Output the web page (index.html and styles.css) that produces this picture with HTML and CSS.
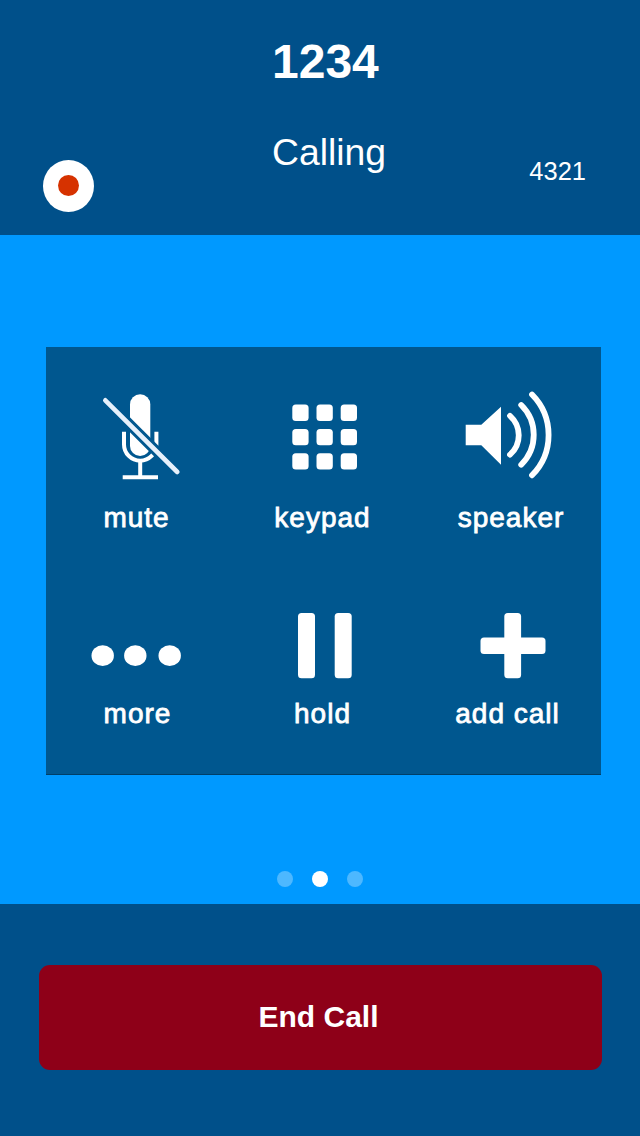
FILE: index.html
```html
<!DOCTYPE html>
<html lang="en">
<head>
  <meta charset="UTF-8">
  <meta name="viewport" content="width=device-width, initial-scale=1.0">
  <title>Calling</title>
  <link rel="stylesheet" href="styles.css">
</head>
<body>
  <div class="header">
    <h1>1234</h1>
    <div class="call-info">
      <button class="record-btn" aria-label="Record"><span class="record-dot"></span></button>
      <div class="call-status">Calling</div>
      <div class="extension">4321</div>
    </div>
  </div>

  <div class="content">
    <div class="controls">
      <button class="control">
        <svg class="icon" viewBox="0 0 185 138">
          <rect x="84" y="31.3" width="20.3" height="61.7" rx="10.1" fill="#fff"/>
          <path d="M78 68.7V81.5a16.2 16.2 0 0 0 32.4 0V68.7M94.2 98v15M76.7 114.3H112" fill="none" stroke="#fff" stroke-width="4"/>
          <path d="M59.3 37.3L131.3 109" stroke="#00578f" stroke-width="10.6"/>
          <path d="M59.3 37.3L131.3 109" stroke="#e6f0fb" stroke-width="4.6" stroke-linecap="round"/>
        </svg>
        <span class="label label-mute">mute</span>
      </button>
      <button class="control">
        <svg class="icon" viewBox="0 0 185 138" fill="#fff">
          <rect x="61.3" y="41.6" width="16.3" height="16.3" rx="3.5"/>
          <rect x="85.5" y="41.6" width="16.3" height="16.3" rx="3.5"/>
          <rect x="109.7" y="41.6" width="16.3" height="16.3" rx="3.5"/>
          <rect x="61.3" y="66" width="16.3" height="16.3" rx="3.5"/>
          <rect x="85.5" y="66" width="16.3" height="16.3" rx="3.5"/>
          <rect x="109.7" y="66" width="16.3" height="16.3" rx="3.5"/>
          <rect x="61.3" y="90.3" width="16.3" height="16.3" rx="3.5"/>
          <rect x="85.5" y="90.3" width="16.3" height="16.3" rx="3.5"/>
          <rect x="109.7" y="90.3" width="16.3" height="16.3" rx="3.5"/>
        </svg>
        <span class="label">keypad</span>
      </button>
      <button class="control">
        <svg class="icon" viewBox="0 0 185 138">
          <path d="M49.7 61.7H65.3L85 43.7V101.7L65.3 82.3H49.7Z" fill="#fff"/>
          <path d="M94 52.8A26 26 0 0 1 94 91.7M105.2 42A41.8 41.8 0 0 1 105.2 101.7M116 31.5A57.5 57.5 0 0 1 116 112.3" fill="none" stroke="#fff" stroke-width="5.8" stroke-linecap="round"/>
        </svg>
        <span class="label label-speaker">speaker</span>
      </button>
      <button class="control">
        <svg class="icon" viewBox="0 0 185 138" fill="#fff">
          <ellipse cx="56.7" cy="96.7" rx="11.2" ry="10.4"/>
          <ellipse cx="89.3" cy="96.7" rx="11.2" ry="10.4"/>
          <ellipse cx="123.7" cy="96.7" rx="11.2" ry="10.4"/>
        </svg>
        <span class="label">more</span>
      </button>
      <button class="control">
        <svg class="icon" viewBox="0 0 185 138" fill="#fff">
          <rect x="67" y="54" width="17" height="65.3" rx="3.5"/>
          <rect x="103.7" y="54" width="17" height="65.3" rx="3.5"/>
        </svg>
        <span class="label">hold</span>
      </button>
      <button class="control">
        <svg class="icon" viewBox="0 0 185 138" fill="#fff">
          <rect x="88.3" y="54" width="16.8" height="65.3" rx="3.5"/>
          <rect x="64.5" y="78.5" width="65" height="16.5" rx="3.5"/>
        </svg>
        <span class="label">add call</span>
      </button>
    </div>

    <div class="pager">
      <span class="dot"></span>
      <span class="dot active"></span>
      <span class="dot"></span>
    </div>
  </div>

  <div class="footer">
    <button class="end-btn">End Call</button>
  </div>
</body>
</html>
```

FILE: styles.css
```css
* {
  margin: 0;
  padding: 0;
  box-sizing: border-box;
}

body {
  width: 640px;
  height: 1136px;
  display: flex;
  flex-direction: column;
  font-family: 'Liberation Sans', Arial, sans-serif;
  color: white;
  background: #0099ff;
}

button {
  border: none;
  background: none;
  color: inherit;
  font-family: inherit;
  cursor: pointer;
}

.header {
  height: 235px;
  padding: 34px 54px 0 43px;
  background: #00508a;
}

.header h1 {
  font-size: 48px;
  line-height: 56px;
  font-weight: bold;
  padding-left: 229px;
}

.call-info {
  display: flex;
  align-items: flex-start;
  padding-top: 40px;
}

.record-btn {
  display: flex;
  align-items: center;
  justify-content: center;
  width: 51px;
  height: 52px;
  margin-top: 30px;
  padding-bottom: 1px;
  border-radius: 50%;
  background: white;
}

.record-dot {
  width: 21px;
  height: 21px;
  border-radius: 50%;
  background: #d63200;
}

.call-status {
  flex: 1;
  padding-left: 178px;
  font-size: 37.3px;
  line-height: 44px;
}

.extension {
  margin-top: 26px;
  font-size: 25.5px;
  line-height: 30px;
}

.content {
  height: 669px;
  padding: 112px 39px 0 46px;
  background: #0099ff;
}

.controls {
  display: grid;
  grid-template-columns: repeat(3, 185px);
  grid-auto-rows: 196px;
  height: 428px;
  padding-top: 16px;
  background: #00578f;
  border-bottom: 1px solid #003f68;
}

.control {
  display: flex;
  flex-direction: column;
  align-items: center;
}

.icon {
  width: 185px;
  height: 138px;
}

.label {
  padding: 1px 2px 0 0;
  font-size: 28px;
  line-height: 32px;
  letter-spacing: 1px;
  -webkit-text-stroke: 0.8px white;
}

.label-mute {
  padding-right: 4px;
}

.label-speaker {
  padding: 1px 0 0 5px;
}

.pager {
  display: flex;
  gap: 19px;
  padding: 96px 0 0 231px;
}

.dot {
  width: 16px;
  height: 16px;
  border-radius: 50%;
  background: #4db8ff;
}

.dot.active {
  background: white;
}

.footer {
  flex: 1;
  padding: 61px 38px 0 39px;
  background: #00508a;
}

.end-btn {
  width: 100%;
  height: 105px;
  padding: 0 4px 2px 0;
  border-radius: 11px;
  background: #8e0018;
  font-size: 30px;
  font-weight: bold;
}
```
